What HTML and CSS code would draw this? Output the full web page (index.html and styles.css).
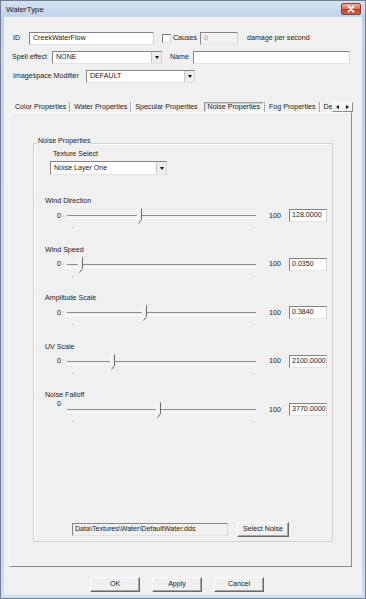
FILE: index.html
```html
<!DOCTYPE html>
<html>
<head>
<meta charset="utf-8">
<title>WaterType</title>
<link rel="stylesheet" href="styles.css">
</head>
<body>
<div class="window">
  <div class="titlebar">
    <span class="title">WaterType</span>
    <span class="close"><svg width="10" height="8" viewBox="0 0 10 8"><path d="M2.5 1.5L7.5 6.5M7.5 1.5L2.5 6.5" stroke="#fff" stroke-width="1.8" stroke-linecap="round"/></svg></span>
  </div>
  <div class="client">
    <div class="form">
      <div class="row row1">
        <span class="lbl lbl-id">ID</span>
        <span class="input in-id">CreekWaterFlow</span>
        <span class="check"></span>
        <span class="lbl lbl-causes">Causes</span>
        <span class="input disabled in-causes">0</span>
        <span class="lbl lbl-dmg">damage per second</span>
      </div>
      <div class="row row2">
        <span class="lbl lbl-spell">Spell effect</span>
        <span class="select sel-spell"><span class="sel-text">NONE</span><span class="dd"><span class="tri-down"></span></span></span>
        <span class="lbl lbl-name">Name</span>
        <span class="input in-name"></span>
      </div>
      <div class="row row3">
        <span class="lbl lbl-ism">Imagespace Modifier</span>
        <span class="select sel-ism"><span class="sel-text">DEFAULT</span><span class="dd"><span class="tri-down"></span></span></span>
      </div>
    </div>

    <div class="tabbar">
      <div class="tabstrip">
        <span class="tab">Color Properties</span><span class="sep"></span>
        <span class="tab">Water Properties</span><span class="sep"></span>
        <span class="tab">Specular Properties</span>
        <span class="tab active">Noise Properties</span><span class="sep"></span>
        <span class="tab">Fog Properties</span><span class="sep"></span>
        <span class="tab tab-last">De</span>
      </div>
      <div class="arrows">
        <span class="arrow"><span class="tri-left"></span></span>
        <span class="arrow arrow-r"><span class="tri-right"></span></span>
      </div>
    </div>

    <div class="panel">
      <div class="group">
        <span class="legend">Noise Properties</span>
        <div class="texlabel">Texture Select</div>
        <span class="select sel-tex"><span class="sel-text">Noise Layer One</span><span class="dd"><span class="tri-down"></span></span></span>

        <div class="section first">
          <div class="slabel">Wind Direction</div>
          <div class="srow">
            <span class="zero">0</span>
            <div class="slider"><svg class="thumb" style="left:69px" width="7" height="16" viewBox="0 0 7 16"><path d="M1 0H6V12L3 16L1 13Z" fill="#f0f0f0"/><path d="M1.5 0.5V12.5" stroke="#ffffff" fill="none"/><path d="M5.5 0.5V11.5L2.5 15.5" stroke="#6a6a6a" fill="none"/></svg></div>
            <span class="hundred">100</span>
            <span class="input val">128.0000</span>
          </div>
        </div>

        <div class="section">
          <div class="slabel">Wind Speed</div>
          <div class="srow">
            <span class="zero">0</span>
            <div class="slider"><svg class="thumb" style="left:10px" width="7" height="16" viewBox="0 0 7 16"><path d="M1 0H6V12L3 16L1 13Z" fill="#f0f0f0"/><path d="M1.5 0.5V12.5" stroke="#ffffff" fill="none"/><path d="M5.5 0.5V11.5L2.5 15.5" stroke="#6a6a6a" fill="none"/></svg></div>
            <span class="hundred">100</span>
            <span class="input val">0.0350</span>
          </div>
        </div>

        <div class="section">
          <div class="slabel">Amplitude Scale</div>
          <div class="srow">
            <span class="zero">0</span>
            <div class="slider"><svg class="thumb" style="left:74px" width="7" height="16" viewBox="0 0 7 16"><path d="M1 0H6V12L3 16L1 13Z" fill="#f0f0f0"/><path d="M1.5 0.5V12.5" stroke="#ffffff" fill="none"/><path d="M5.5 0.5V11.5L2.5 15.5" stroke="#6a6a6a" fill="none"/></svg></div>
            <span class="hundred">100</span>
            <span class="input val">0.3840</span>
          </div>
        </div>

        <div class="section">
          <div class="slabel">UV Scale</div>
          <div class="srow">
            <span class="zero">0</span>
            <div class="slider"><svg class="thumb" style="left:42px" width="7" height="16" viewBox="0 0 7 16"><path d="M1 0H6V12L3 16L1 13Z" fill="#f0f0f0"/><path d="M1.5 0.5V12.5" stroke="#ffffff" fill="none"/><path d="M5.5 0.5V11.5L2.5 15.5" stroke="#6a6a6a" fill="none"/></svg></div>
            <span class="hundred">100</span>
            <span class="input val">2100.0000</span>
          </div>
        </div>

        <div class="section">
          <div class="slabel">Noise Falloff</div>
          <div class="srow low">
            <span class="zero hi">0</span>
            <div class="slider"><svg class="thumb" style="left:88px" width="7" height="16" viewBox="0 0 7 16"><path d="M1 0H6V12L3 16L1 13Z" fill="#f0f0f0"/><path d="M1.5 0.5V12.5" stroke="#ffffff" fill="none"/><path d="M5.5 0.5V11.5L2.5 15.5" stroke="#6a6a6a" fill="none"/></svg></div>
            <span class="hundred">100</span>
            <span class="input val">3770.0000</span>
          </div>
        </div>

        <div class="pathrow">
          <span class="input disabled path">Data\Textures\Water\DefaultWater.dds</span>
          <span class="btn btn-noise">Select Noise</span>
        </div>
      </div>
    </div>

    <div class="buttons">
      <span class="btn">OK</span>
      <span class="btn">Apply</span>
      <span class="btn">Cancel</span>
    </div>
  </div>
</div>
</body>
</html>
```
FILE: styles.css
```css
* { box-sizing: border-box; margin: 0; padding: 0; }
html, body { width: 366px; height: 599px; overflow: hidden; background: #ffffff; }
body {
  font-family: "Liberation Sans", Arial, sans-serif;
  font-size: 7.1px;
  color: #222222;
}

.window {
  width: 366px;
  height: 599px;
  border: 1px solid #6f7f94;
  background: linear-gradient(#d6e2f2 0px, #c0d2ea 16px, #c4d5ea 60px, #c6d8ec 560px, #cde3f3 599px);
  display: flex;
  flex-direction: column;
}

.titlebar {
  height: 16px;
  flex: none;
  display: flex;
  align-items: flex-start;
  justify-content: space-between;
  padding: 0 4px 0 5px;
}
.title { font-size: 7.9px; line-height: 17px; color: #1b1b1b; }
.close {
  margin-top: 2px;
  width: 20px;
  height: 12px;
  border: 1px solid #83423a;
  border-radius: 2px;
  background: linear-gradient(#eab2a4, #d77462 45%, #c3412e 55%, #d2624c);
  display: flex;
  align-items: center;
  justify-content: center;
}

.client {
  flex: 1;
  margin: 0 3px 3px 3px;
  background: #f0f0f0;
  display: flex;
  flex-direction: column;
}

/* top form */
.form { padding-top: 15px; display: flex; flex-direction: column; gap: 6px; }
.row { height: 13px; display: flex; align-items: center; line-height: 13px; white-space: nowrap; }
.row1 { padding-left: 9px; }
.row2 { padding-left: 8px; }
.row3 { padding-left: 9px; }
.lbl { flex: none; }
.lbl-id { width: 16px; }
.lbl-causes { width: 27px; margin-left: 2px; }
.lbl-dmg { margin-left: 9px; }
.lbl-spell { width: 40px; }
.lbl-name { width: 23px; margin-left: 8px; }
.lbl-ism { width: 73px; }

.input {
  flex: none;
  display: block;
  height: 13px;
  background: #ffffff;
  border: 1px solid;
  border-color: #858585 #d4d4d4 #e4e4e4 #858585;
  padding-left: 3px;
  line-height: 11px;
  white-space: nowrap;
  overflow: hidden;
}
.input.disabled { background: #f0f0f0; }
.in-id { width: 125px; }
.in-causes { width: 38px; color: #a0a0a0; }
.in-name { width: 157px; }

.check {
  flex: none;
  width: 9px;
  height: 9px;
  margin-left: 8px;
  background: #ffffff;
  border: 1px solid;
  border-color: #7a7a7a #cfcfcf #dedede #7a7a7a;
}

.select {
  flex: none;
  display: flex;
  height: 13px;
  background: #ffffff;
  border: 1px solid;
  border-color: #858585 #d4d4d4 #e4e4e4 #858585;
  line-height: 11px;
}
.sel-text { flex: 1; padding-left: 3px; overflow: hidden; white-space: nowrap; }
.dd {
  flex: none;
  width: 10px;
  background: #ececec;
  border-left: 1px solid #c8c8c8;
  display: flex;
  align-items: center;
  justify-content: center;
}
.tri-down { width: 0; height: 0; border-left: 2.5px solid transparent; border-right: 2.5px solid transparent; border-top: 3px solid #111; }
.sel-spell { width: 110px; }
.sel-ism { width: 109px; }

/* tabs */
.tabbar { display: flex; height: 10px; margin: 19px 0 0 8px; flex: none; }
.tabstrip { width: 318px; display: flex; align-items: center; white-space: nowrap; }
.tab { flex: none; padding: 0 3px; line-height: 10px; height: 10px; }
.tab-last { padding-right: 0; }
.tab.active {
  margin-left: 3px;
  border: 1px solid;
  border-color: #9a9a9a #ffffff #ffffff #9a9a9a;
  box-shadow: inset 1px 1px #d0d0d0;
  line-height: 8px;
}
.sep { flex: none; width: 2px; height: 10px; border-left: 1px solid #a8a8a8; border-right: 1px solid #ffffff; }
.arrows { display: flex; margin-left: 2px; }
.arrow {
  width: 11px;
  height: 10px;
  background: #f4f4f4;
  border: 1px solid;
  border-color: #ffffff #8a8a8a #8a8a8a #ffffff;
  display: flex;
  align-items: center;
  justify-content: center;
}
.arrow-r { margin-left: -1px; }
.tri-left { width: 0; height: 0; border-top: 2.5px solid transparent; border-bottom: 2.5px solid transparent; border-right: 3px solid #111; }
.tri-right { width: 0; height: 0; border-top: 2.5px solid transparent; border-bottom: 2.5px solid transparent; border-left: 3px solid #111; }

/* panel */
.panel {
  flex: none;
  width: 343px;
  height: 455px;
  margin-left: 5px;
  border: 1px solid;
  border-color: #fbfbfb #8c8c8c #8c8c8c #fbfbfb;
  padding: 30px 0 0 23px;
}
.group {
  position: relative;
  width: 300px;
  height: 399px;
  border: 1px solid #d2d2d2;
  box-shadow: inset 1px 1px #ffffff;
  padding-left: 11px;
  display: flex;
  flex-direction: column;
  align-items: flex-start;
}
.legend {
  position: absolute;
  top: -7px;
  left: 3px;
  padding: 0 1px;
  line-height: 9px;
  background: #f0f0f0;
}
.texlabel { margin: 5px 0 0 8px; line-height: 10px; }
.sel-tex { width: 117px; height: 14px; margin: 2px 0 0 5px; line-height: 12px; }

.section { height: 48.5px; flex: none; }
.section.first { margin-top: 21px; }
.slabel { line-height: 10px; height: 10px; }
.srow { margin-top: 3px; height: 13px; display: flex; align-items: center; line-height: 10px; }
.zero { flex: none; width: 10px; margin-left: 12px; }
.zero.hi { margin-bottom: 11px; }
.slider { flex: none; position: relative; width: 189px; height: 13px; }
.slider::before {
  content: "";
  position: absolute;
  left: 0;
  right: 0;
  top: 6px;
  height: 2px;
  border-top: 1px solid #8e8e8e;
  border-bottom: 1px solid #ffffff;
}
.slider::after {
  content: "";
  position: absolute;
  left: 5px;
  top: 18px;
  width: 1px;
  height: 1px;
  background: #a8a8a8;
  box-shadow: 181px 0 #a8a8a8;
}
.thumb { position: absolute; top: -1px; }
.hundred { flex: none; width: 20px; margin-left: 13px; }
.val { width: 38px; height: 13px; padding-left: 2px; }

.pathrow { margin-top: auto; margin-bottom: 4px; height: 15px; display: flex; align-items: center; }
.path { width: 156px; margin-left: 27px; padding-left: 2px; }
.btn {
  flex: none;
  display: block;
  height: 15px;
  width: 50px;
  text-align: center;
  line-height: 13px;
  background: #f0f0f0;
  border: 1px solid;
  border-color: #ffffff #6a6a6a #6a6a6a #ffffff;
  box-shadow: inset -1px -1px #a5a5a5;
}
.btn-noise { width: 52px; margin-left: 9px; }

.buttons { flex: none; display: flex; gap: 12px; margin-top: 10px; padding-left: 86px; }
```
